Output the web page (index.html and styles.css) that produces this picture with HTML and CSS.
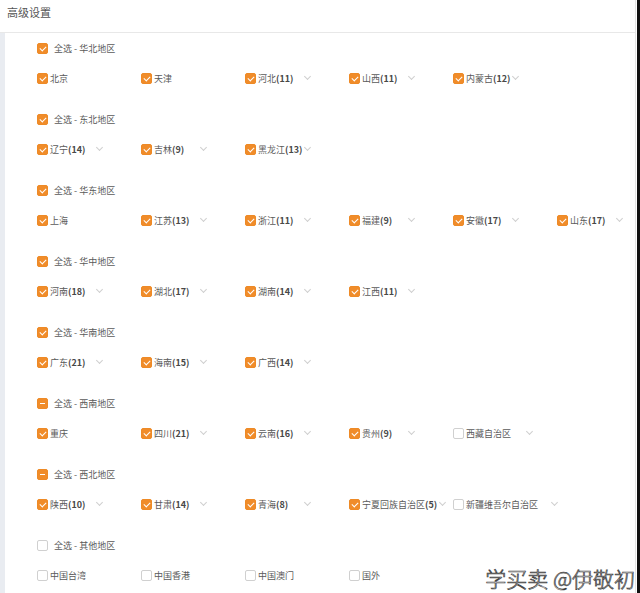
FILE: index.html
```html
<!DOCTYPE html>
<html lang="zh-CN">
<head>
<meta charset="utf-8">
<title>高级设置</title>
<link rel="stylesheet" href="styles.css">
</head>
<body>
<div class="screen">
  <div class="panel">
    <div class="header">高级设置</div>
    <div class="body">
      <div class="rail"></div>
      <div class="content">

        <section class="group">
          <label class="group-title"><span class="cb on"></span>全选 - 华北地区</label>
          <div class="items">
            <div class="item"><span class="cb on"></span><span class="name">北京</span></div>
            <div class="item"><span class="cb on"></span><span class="name">天津</span></div>
            <div class="item"><span class="cb on"></span><span class="name">河北<b>(11)</b></span><i class="chev"></i></div>
            <div class="item"><span class="cb on"></span><span class="name">山西<b>(11)</b></span><i class="chev"></i></div>
            <div class="item"><span class="cb on"></span><span class="name">内蒙古<b>(12)</b></span><i class="chev"></i></div>
          </div>
        </section>

        <section class="group">
          <label class="group-title"><span class="cb on"></span>全选 - 东北地区</label>
          <div class="items">
            <div class="item"><span class="cb on"></span><span class="name">辽宁<b>(14)</b></span><i class="chev"></i></div>
            <div class="item"><span class="cb on"></span><span class="name">吉林<b>(9)</b></span><i class="chev"></i></div>
            <div class="item"><span class="cb on"></span><span class="name">黑龙江<b>(13)</b></span><i class="chev"></i></div>
          </div>
        </section>

        <section class="group">
          <label class="group-title"><span class="cb on"></span>全选 - 华东地区</label>
          <div class="items">
            <div class="item"><span class="cb on"></span><span class="name">上海</span></div>
            <div class="item"><span class="cb on"></span><span class="name">江苏<b>(13)</b></span><i class="chev"></i></div>
            <div class="item"><span class="cb on"></span><span class="name">浙江<b>(11)</b></span><i class="chev"></i></div>
            <div class="item"><span class="cb on"></span><span class="name">福建<b>(9)</b></span><i class="chev"></i></div>
            <div class="item"><span class="cb on"></span><span class="name">安徽<b>(17)</b></span><i class="chev"></i></div>
            <div class="item"><span class="cb on"></span><span class="name">山东<b>(17)</b></span><i class="chev"></i></div>
          </div>
        </section>

        <section class="group">
          <label class="group-title"><span class="cb on"></span>全选 - 华中地区</label>
          <div class="items">
            <div class="item"><span class="cb on"></span><span class="name">河南<b>(18)</b></span><i class="chev"></i></div>
            <div class="item"><span class="cb on"></span><span class="name">湖北<b>(17)</b></span><i class="chev"></i></div>
            <div class="item"><span class="cb on"></span><span class="name">湖南<b>(14)</b></span><i class="chev"></i></div>
            <div class="item"><span class="cb on"></span><span class="name">江西<b>(11)</b></span><i class="chev"></i></div>
          </div>
        </section>

        <section class="group">
          <label class="group-title"><span class="cb on"></span>全选 - 华南地区</label>
          <div class="items">
            <div class="item"><span class="cb on"></span><span class="name">广东<b>(21)</b></span><i class="chev"></i></div>
            <div class="item"><span class="cb on"></span><span class="name">海南<b>(15)</b></span><i class="chev"></i></div>
            <div class="item"><span class="cb on"></span><span class="name">广西<b>(14)</b></span><i class="chev"></i></div>
          </div>
        </section>

        <section class="group">
          <label class="group-title"><span class="cb part"></span>全选 - 西南地区</label>
          <div class="items">
            <div class="item"><span class="cb on"></span><span class="name">重庆</span></div>
            <div class="item"><span class="cb on"></span><span class="name">四川<b>(21)</b></span><i class="chev"></i></div>
            <div class="item"><span class="cb on"></span><span class="name">云南<b>(16)</b></span><i class="chev"></i></div>
            <div class="item"><span class="cb on"></span><span class="name">贵州<b>(9)</b></span><i class="chev"></i></div>
            <div class="item loose"><span class="cb"></span><span class="name">西藏自治区</span><i class="chev"></i></div>
          </div>
        </section>

        <section class="group">
          <label class="group-title"><span class="cb part"></span>全选 - 西北地区</label>
          <div class="items">
            <div class="item"><span class="cb on"></span><span class="name">陕西<b>(10)</b></span><i class="chev"></i></div>
            <div class="item"><span class="cb on"></span><span class="name">甘肃<b>(14)</b></span><i class="chev"></i></div>
            <div class="item"><span class="cb on"></span><span class="name">青海<b>(8)</b></span><i class="chev"></i></div>
            <div class="item"><span class="cb on"></span><span class="name">宁夏回族自治区<b>(5)</b></span><i class="chev"></i></div>
            <div class="item loose"><span class="cb"></span><span class="name">新疆维吾尔自治区</span><i class="chev"></i></div>
          </div>
        </section>

        <section class="group">
          <label class="group-title"><span class="cb"></span>全选 - 其他地区</label>
          <div class="items">
            <div class="item"><span class="cb"></span><span class="name">中国台湾</span></div>
            <div class="item"><span class="cb"></span><span class="name">中国香港</span></div>
            <div class="item"><span class="cb"></span><span class="name">中国澳门</span></div>
            <div class="item"><span class="cb"></span><span class="name">国外</span></div>
          </div>
        </section>

      </div>
    </div>
  </div>
  <div class="edge"></div>
  <div class="credit">学买卖 @伊敬初</div>
</div>
</body>
</html>
```

FILE: styles.css
```css
* {
  box-sizing: border-box;
}

html, body {
  margin: 0;
  padding: 0;
  background: #ffffff;
}

body {
  font-family: "Noto Sans CJK SC", "Noto Sans", sans-serif;
  color: #555555;
}

.screen {
  position: relative;
  display: flex;
  width: 640px;
  height: 593px;
  overflow: hidden;
}

.panel {
  flex: none;
  width: 636px;
  height: 100%;
  border-right: 1px solid #e4e4e4;
  display: flex;
  flex-direction: column;
  overflow: hidden;
}

.edge {
  flex: none;
  width: 3px;
  margin-left: 1px;
  background: #111111;
}

.header {
  flex: none;
  height: 33px;
  padding-left: 7px;
  font-size: 11px;
  line-height: 24px;
  color: #555555;
  border-bottom: 1px solid #e8e8e8;
}

.body {
  flex: 1;
  display: flex;
  min-height: 0;
}

.rail {
  flex: none;
  width: 5px;
  background: #e9ecf1;
}

.content {
  flex: 1;
  min-width: 0;
  padding-left: 32px;
}

.group {
  padding-bottom: 11px;
}

.group-title {
  display: flex;
  align-items: center;
  height: 30px;
  font-size: 9px;
  color: #5a5a5a;
}

.group-title .cb {
  margin-right: 6px;
}

.items {
  display: grid;
  grid-template-columns: repeat(6, 104px);
  height: 30px;
  align-items: center;
}

.item {
  display: flex;
  align-items: center;
  font-size: 9px;
  white-space: nowrap;
}

.item .cb {
  margin-right: 2px;
}

.name {
  min-width: 44px;
  color: #5a5a5a;
}

.name b {
  font-weight: 700;
  color: #484848;
}

/* checkbox: unchecked, checked and partly checked */
.cb {
  position: relative;
  flex: none;
  width: 11px;
  height: 11px;
  border: 1px solid #d0d0d0;
  border-radius: 2px;
  background: #ffffff;
}

.cb.on,
.cb.part {
  border-color: #ee8a26;
  background: #f08c2a;
}

.cb.on::after {
  content: "";
  position: absolute;
  left: 3px;
  top: 1px;
  width: 3px;
  height: 5px;
  border-right: 1.5px solid #ffffff;
  border-bottom: 1.5px solid #ffffff;
  transform: rotate(45deg);
}

.cb.part::after {
  content: "";
  position: absolute;
  left: 2px;
  right: 2px;
  top: 4px;
  height: 1.5px;
  background: #ffffff;
}

/* drop-down chevron after a province */
.chev {
  flex: none;
  width: 5px;
  height: 5px;
  margin-left: 3px;
  margin-top: -3px;
  border-right: 1px solid #cfcfcf;
  border-bottom: 1px solid #cfcfcf;
  transform: rotate(45deg);
}

.item.loose .chev {
  margin-left: 16px;
}

.credit {
  position: absolute;
  right: 5px;
  bottom: 1px;
  font-family: "Noto Sans CJK SC", sans-serif;
  font-size: 21px;
  font-weight: 300;
  line-height: 28px;
  color: #ffffff;
  -webkit-text-stroke: 0.7px #3a3a3a;
  letter-spacing: 0;
}
```
